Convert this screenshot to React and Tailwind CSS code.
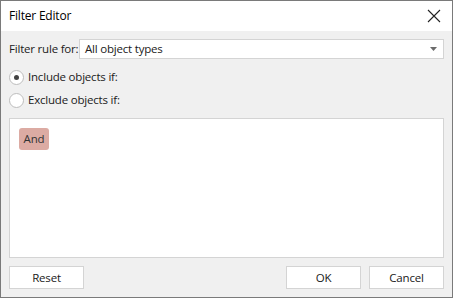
import React from 'react';

export default function App() {
  return (
    <div className="w-[453px] h-[298px] border border-[#7a7a7a] bg-[#f0f0f0] flex flex-col text-[11.5px] tracking-[-0.2px] text-[#202020]" style={{ fontFamily: '"Open Sans", "Noto Sans", sans-serif' }}>
      {/* Title bar */}
      <div className="h-[30px] bg-white flex items-center justify-between pl-[8px] pr-[9px] shrink-0">
        <span className="text-[12px] text-black">Filter Editor</span>
        <svg width="14" height="14" viewBox="0 0 14 14" className="mr-[2px]">
          <path d="M1 1 L13 13 M13 1 L1 13" stroke="#222" strokeWidth="1.1" />
        </svg>
      </div>

      <div className="flex-1 flex flex-col px-[8px] pt-[8px] pb-[8px]">
        {/* Filter rule row */}
        <div className="flex items-center h-[20px]">
          <span className="w-[70px] shrink-0 whitespace-nowrap">Filter rule for:</span>
          <div className="flex-1 h-[20px] bg-white border border-[#d4d4d4] flex items-center justify-between pl-[5px] pr-[6px]">
            <span>All object types</span>
            <svg width="7" height="4" viewBox="0 0 7 4">
              <path d="M0 0 H7 L3.5 4 Z" fill="#6b6b6b" />
            </svg>
          </div>
        </div>

        {/* Radios */}
        <div className="flex items-center gap-[4px] mt-[8px] h-[20px]">
          <span className="w-[15px] h-[15px] rounded-full border border-[#bdbdbd] bg-white flex items-center justify-center">
            <span className="w-[5px] h-[5px] rounded-full bg-[#444]" />
          </span>
          <span>Include objects if:</span>
        </div>
        <div className="flex items-center gap-[4px] mt-[3px] h-[20px]">
          <span className="w-[15px] h-[15px] rounded-full border border-[#bdbdbd] bg-white" />
          <span>Exclude objects if:</span>
        </div>

        {/* Condition area */}
        <div className="mt-[8px] flex-1 bg-white border border-[#d4d4d4] p-[9px]">
          <span className="inline-flex items-center justify-center h-[22px] w-[30px] rounded-[3px] bg-[#dcaba3] text-[#333]">And</span>
        </div>

        {/* Buttons */}
        <div className="flex items-center mt-[8px]">
          <button className="w-[75px] h-[23px] bg-white border border-[#d4d4d4]">Reset</button>
          <div className="flex-1" />
          <button className="w-[75px] h-[23px] bg-white border border-[#d4d4d4]">OK</button>
          <button className="w-[75px] h-[23px] bg-white border border-[#d4d4d4] ml-[8px]">Cancel</button>
        </div>
      </div>
    </div>
  );
}
